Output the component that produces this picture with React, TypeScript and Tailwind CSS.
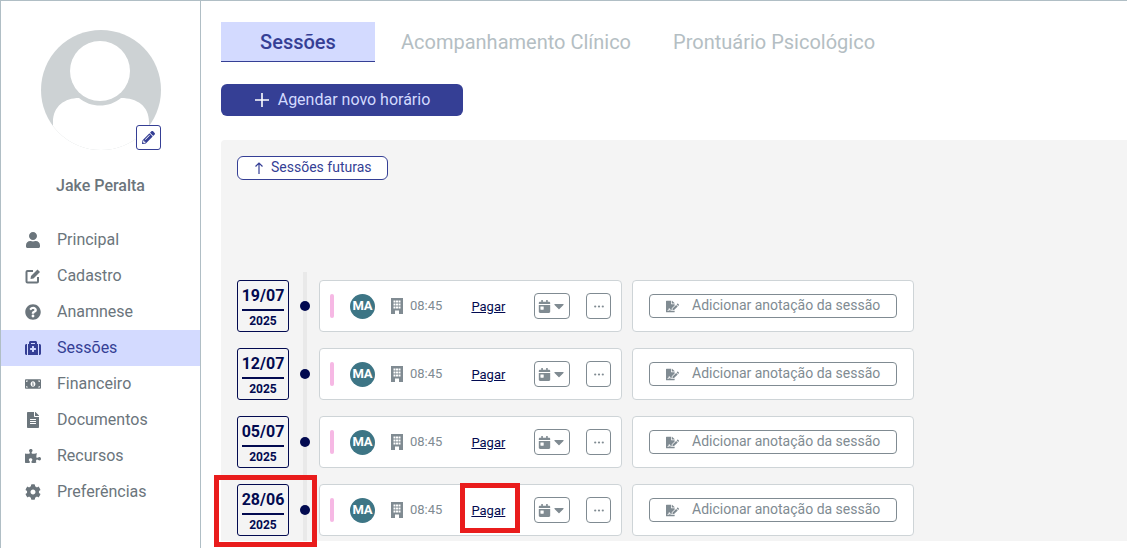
import {
  FaCalendarDay,
  FaCaretDown,
  FaCog,
  FaFileAlt,
  FaFileSignature,
  FaMedkit,
  FaMoneyBillAlt,
  FaPencilAlt,
  FaPuzzlePiece,
  FaQuestionCircle,
  FaUser,
} from 'react-icons/fa';

function EditIcon({ className }: { className?: string }) {
  return (
    <svg viewBox="0 0 16 16" className={className} width="16" height="16">
      <path d="M8 3 H2.5 A1 1 0 0 0 1.5 4 V13.5 A1 1 0 0 0 2.5 14.5 H12 A1 1 0 0 0 13 13.5 V9" fill="none" stroke="currentColor" strokeWidth="2" />
      <path d="M5.5 11 L6 8 L12.5 1.5 L15 4 L8.5 10.5 Z" fill="currentColor" />
    </svg>
  );
}

const menu = [
  { label: 'Principal', icon: FaUser },
  { label: 'Cadastro', icon: EditIcon },
  { label: 'Anamnese', icon: FaQuestionCircle },
  { label: 'Sessões', icon: FaMedkit, active: true },
  { label: 'Financeiro', icon: FaMoneyBillAlt },
  { label: 'Documentos', icon: FaFileAlt },
  { label: 'Recursos', icon: FaPuzzlePiece },
  { label: 'Preferências', icon: FaCog },
];

const sessions = [
  { day: '19/07', year: '2025' },
  { day: '12/07', year: '2025' },
  { day: '05/07', year: '2025' },
  { day: '28/06', year: '2025', marked: true },
];

function Avatar() {
  return (
    <div className="relative h-[120px] w-[120px]">
      <svg viewBox="0 0 120 120" className="h-[120px] w-[120px]">
        <defs>
          <clipPath id="avatar-clip">
            <circle cx="60" cy="60" r="60" />
          </clipPath>
        </defs>
        <circle cx="60" cy="60" r="60" fill="#cdd2d4" />
        <g clipPath="url(#avatar-clip)">
          <circle cx="59" cy="41" r="30" fill="#ffffff" />
          <path d="M12 120 V92 C12 76 24 68 38 68 C50 78 68 78 80 68 C96 68 108 76 108 92 V120 Z" fill="#ffffff" />
        </g>
      </svg>
      <button className="absolute bottom-0 right-0 flex h-[25px] w-[25px] items-center justify-center rounded-[3px] border border-[#353f95] bg-white text-[#353f95]">
        <FaPencilAlt className="text-[13px]" />
      </button>
    </div>
  );
}

function BuildingIcon() {
  return (
    <svg viewBox="0 0 12 16" className="ml-[16px] h-[16px] w-[12px]" fill="#808b92">
      <path d="M0 0 H12 V16 H8 V12.5 H4 V16 H0 Z M2.5 2.5 V4.5 H4.5 V2.5 Z M5 2.5 V4.5 H7 V2.5 Z M7.5 2.5 V4.5 H9.5 V2.5 Z M2.5 5.5 V7.5 H4.5 V5.5 Z M5 5.5 V7.5 H7 V5.5 Z M7.5 5.5 V7.5 H9.5 V5.5 Z M2.5 8.5 V10.5 H4.5 V8.5 Z M5 8.5 V10.5 H7 V8.5 Z M7.5 8.5 V10.5 H9.5 V8.5 Z" fillRule="evenodd" />
    </svg>
  );
}

function Sidebar() {
  return (
    <aside className="flex h-[547px] w-[201px] shrink-0 flex-col border-x border-[#b0bec5] pt-[29px]">
      <div className="flex justify-center">
        <Avatar />
      </div>
      <div className="mt-[26px] text-center text-[16px] leading-[20px] font-medium text-[#6b757c]">Jake Peralta</div>
      <nav className="mt-[26px] flex flex-col">
        {menu.map((item) => (
          <div
            key={item.label}
            className={`flex h-[36px] items-center pl-[24px] text-[16px] ${
              item.active ? 'bg-[#d3daff] text-[#353f95]' : 'text-[#6b757c]'
            }`}
          >
            <span className="flex w-[16px] justify-center">
              <item.icon className="text-[16px]" />
            </span>
            <span className="ml-[16px]">{item.label}</span>
          </div>
        ))}
      </nav>
    </aside>
  );
}

function SessionRow({ day, year, marked }: { day: string; year: string; marked?: boolean }) {
  return (
    <div className="relative flex h-[52px] items-center">
      <div className="flex h-[52px] w-[52px] flex-col items-center rounded-[3px] border border-[#020a50] bg-[#f4f4f4] text-[#020a50]">
        <div className="mt-[5px] text-[16px] leading-[20px] font-bold">{day}</div>
        <div className="mt-[3px] h-[2px] w-[42px] bg-[#020a50]" />
        <div className="mt-[2px] text-[12px] leading-[16px] font-bold">{year}</div>
      </div>
      <div className="relative z-10 ml-[11px] h-[10px] w-[10px] rounded-full bg-[#020a50]" />
      <div className="ml-[9px] flex h-[52px] w-[303px] items-center rounded-[4px] border border-[#ced4d7] bg-white">
        <div className="ml-[10px] h-[24px] w-[4px] rounded-full bg-[#f6b8e4]" />
        <div className="ml-[16px] flex h-[25px] w-[25px] items-center justify-center rounded-full bg-[#3d7585] text-[13px] font-bold text-white">
          MA
        </div>
        <BuildingIcon />
        <span className="ml-[7px] text-[13px] text-[#808b92]">08:45</span>
        <span className="ml-[29px] pt-[2px] text-[13px] text-[#020a50] underline">Pagar</span>
        <button className="ml-[29px] flex h-[26px] w-[36px] items-center justify-center rounded-[4px] border border-[#808b92] text-[#808b92]">
          <FaCalendarDay className="text-[13px]" />
          <FaCaretDown className="text-[16px]" />
        </button>
        <button className="ml-[16px] flex h-[26px] w-[25px] items-center justify-center rounded-[4px] border border-[#808b92]">
          <svg viewBox="0 0 10 3" className="h-[3px] w-[10px]" fill="#808b92">
            <circle cx="1.2" cy="1.5" r="1.1" />
            <circle cx="5" cy="1.5" r="1.1" />
            <circle cx="8.8" cy="1.5" r="1.1" />
          </svg>
        </button>
      </div>
      <div className="ml-[10px] flex h-[52px] w-[282px] items-center justify-center rounded-[4px] border border-[#ced4d7] bg-white">
        <button className="flex h-[24px] w-[248px] items-center rounded-[4px] border border-[#808b92] pb-[2px] pl-[16px] text-[14px] text-[#808b92]">
          <FaFileSignature className="mt-[2px] text-[13px]" />
          <span className="ml-[13px]">Adicionar anotação da sessão</span>
        </button>
      </div>
      {marked && (
        <>
          <div className="absolute left-[-23px] top-[-9px] z-20 h-[72px] w-[103px] border-[5px] border-[#e91c1c]" />
          <div className="absolute left-[223px] top-[-1px] z-20 h-[50px] w-[60px] border-[5px] border-[#e91c1c]" />
        </>
      )}
    </div>
  );
}

export default function App() {
  return (
    <div className="flex h-[548px] w-[1127px] overflow-hidden border-t border-[#b0bec5] bg-white font-['Roboto',sans-serif]">
      <Sidebar />
      <main className="min-w-0 flex-1 pl-[20px] pt-[21px]">
        <div className="flex h-[40px] items-center text-[20px]">
          <div className="flex h-[40px] w-[154px] items-center justify-center border-b border-[#353f95] bg-[#d3daff] font-medium text-[#353f95]">
            Sessões
          </div>
          <div className="ml-[26px] text-[#b4bec3]">Acompanhamento Clínico</div>
          <div className="ml-[42px] text-[#b4bec3]">Prontuário Psicológico</div>
        </div>
        <button className="mt-[22px] flex h-[32px] w-[242px] items-center justify-center rounded-[6px] bg-[#353f95] text-[16px] text-[#d3daff]">
          <svg viewBox="0 0 16 16" className="h-[16px] w-[16px]" fill="none" stroke="#ffffff" strokeWidth="1.6">
            <path d="M8 1 V15 M1 8 H15" />
          </svg>
          <span className="ml-[8px]">Agendar novo horário</span>
        </button>
        <section className="relative mt-[24px] h-[401px] rounded-tl-[4px] bg-[#f4f4f4] pl-[16px] pt-[16px]">
          <button className="flex h-[24px] w-[151px] items-center rounded-[6px] border border-[#353f95] bg-white pb-[2px] pl-[16px] text-[14px] text-[#353f95]">
            <svg viewBox="0 0 10 12" className="mt-[2px] h-[12px] w-[10px]" fill="none" stroke="#353f95" strokeWidth="1.2">
              <path d="M5 12 V1 M1.5 4.5 L5 1 L8.5 4.5" />
            </svg>
            <span className="ml-[7px]">Sessões futuras</span>
          </button>
          <div className="absolute bottom-0 left-[82px] top-[132px] w-[4px] bg-[#e9e9e9]" />
          <div className="relative mt-[100px] flex flex-col gap-[16px]">
            {sessions.map((s) => (
              <SessionRow key={s.day} day={s.day} year={s.year} marked={s.marked} />
            ))}
          </div>
        </section>
      </main>
    </div>
  );
}
